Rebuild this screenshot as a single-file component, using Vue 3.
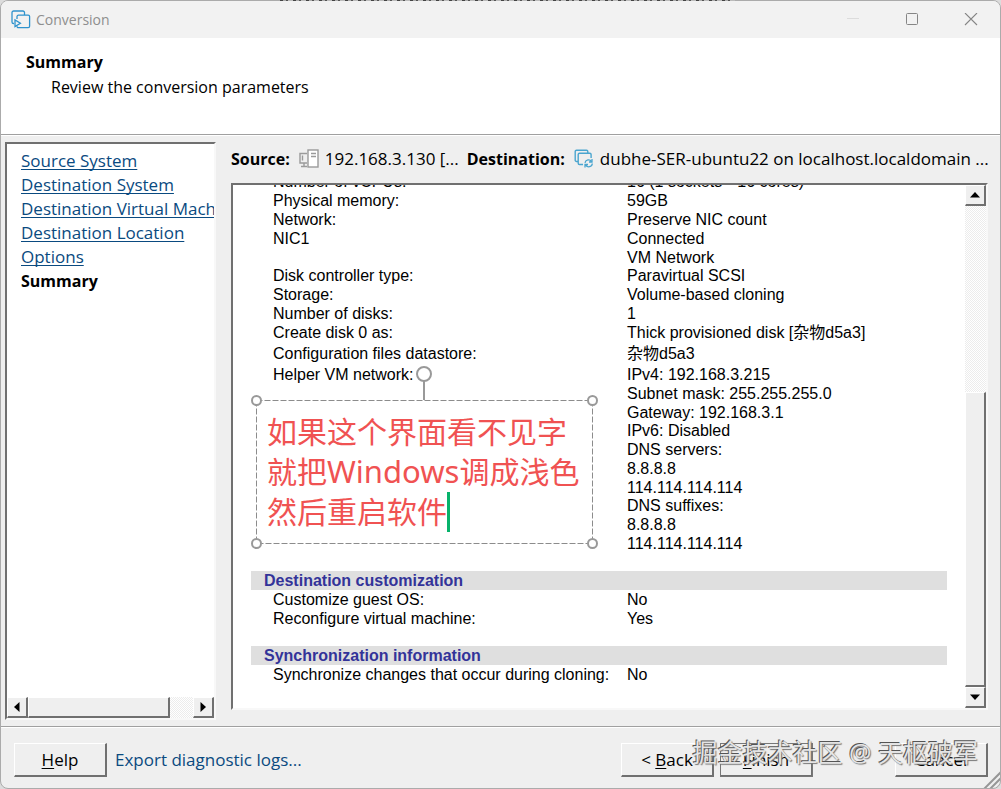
<script setup>
const steps = [
  { label: 'Source System' },
  { label: 'Destination System' },
  { label: 'Destination Virtual Machine' },
  { label: 'Destination Location' },
  { label: 'Options' },
  { label: 'Summary', current: true }
]

const sections = [
  {
    rows: [
      { label: 'Number of vCPUs:', value: '16 (1 sockets * 16 cores)' },
      { label: 'Physical memory:', value: '59GB' },
      { label: 'Network:', value: 'Preserve NIC count' },
      { label: 'NIC1', value: 'Connected' },
      { label: '', value: 'VM Network' },
      { label: 'Disk controller type:', value: 'Paravirtual SCSI', kind: 'snug' },
      { label: 'Storage:', value: 'Volume-based cloning' },
      { label: 'Number of disks:', value: '1' },
      { label: 'Create disk 0 as:', value: 'Thick provisioned disk [杂物d5a3]', kind: 'tall' },
      { label: 'Configuration files datastore:', value: '杂物d5a3', kind: 'tall' },
      { label: 'Helper VM network:', value: 'IPv4: 192.168.3.215' },
      { label: '', value: 'Subnet mask: 255.255.255.0' },
      { label: '', value: 'Gateway: 192.168.3.1' },
      { label: '', value: 'IPv6: Disabled', kind: 'snug' },
      { label: '', value: 'DNS servers:' },
      { label: '', value: '8.8.8.8' },
      { label: '', value: '114.114.114.114' },
      { label: '', value: 'DNS suffixes:', kind: 'snug' },
      { label: '', value: '8.8.8.8' },
      { label: '', value: '114.114.114.114' }
    ]
  },
  {
    title: 'Destination customization',
    rows: [
      { label: 'Customize guest OS:', value: 'No' },
      { label: 'Reconfigure virtual machine:', value: 'Yes' }
    ]
  },
  {
    title: 'Synchronization information',
    rows: [{ label: 'Synchronize changes that occur during cloning:', value: 'No' }]
  }
]
</script>

<template>
  <div class="desktop">
    <div class="window">
      <header class="titlebar">
        <svg class="app-icon" width="20" height="20" viewBox="0 0 20 20" fill="none" stroke="#2f93cd" stroke-width="1.3">
          <path d="M13.500 5V2.600A1.600 1.600 0 0 0 11.900 1H2.600A1.600 1.600 0 0 0 1 2.600v9.300a1.600 1.600 0 0 0 1.600 1.600H3" />
          <path d="M6 9V6.600A1.400 1.400 0 0 1 7.400 5.200h9.800a1.400 1.400 0 0 1 1.400 1.400v9.600a1.400 1.400 0 0 1-1.400 1.400H7.400A1.400 1.400 0 0 1 6 16.200" />
          <path d="M4 10v6.600l5.400-3.300z" />
        </svg>
        <span class="caption">Conversion</span>
        <div class="window-controls">
          <button type="button" aria-label="Minimize" disabled>
            <svg width="14" height="14" viewBox="0 0 14 14" stroke="#dcdcdc"><path d="M1 5.500h12" /></svg>
          </button>
          <button type="button" aria-label="Maximize">
            <svg width="14" height="14" viewBox="0 0 14 14" fill="none" stroke="#868686"><rect x="1.5" y=".5" width="11" height="11" rx="1" /></svg>
          </button>
          <button type="button" aria-label="Close">
            <svg width="14" height="14" viewBox="0 0 14 14" stroke="#868686" stroke-width="1.1"><path d="M1 0l12 12M13 0L1 12" /></svg>
          </button>
        </div>
      </header>

      <section class="intro">
        <h1>Summary</h1>
        <p>Review the conversion parameters</p>
      </section>

      <main class="body">
        <nav class="steps sunken">
          <ul>
            <li v-for="step in steps" :key="step.label">
              <strong v-if="step.current">{{ step.label }}</strong>
              <a v-else href="#">{{ step.label }}</a>
            </li>
          </ul>
          <div class="hscroll">
            <button type="button" class="raised arrow" aria-label="Scroll left">
              <svg width="6" height="10" viewBox="0 0 6 10"><path d="M5.5 0v10L0 5z" /></svg>
            </button>
            <div class="raised hthumb"></div>
            <div class="track htrack"></div>
            <button type="button" class="raised arrow" aria-label="Scroll right">
              <svg width="6" height="10" viewBox="0 0 6 10"><path d="M.5 0v10L6 5z" /></svg>
            </button>
          </div>
        </nav>

        <div class="details">
          <div class="route">
            <strong>Source:</strong>
            <svg class="route-icon" width="20" height="20" viewBox="0 0 20 20" fill="none" stroke="#9a9a9a" stroke-width="1.4">
              <path d="M8 4.500H1V14h7M5 14v3.500M2 17.500h6M3.500 6.500v5" />
              <rect x="9" y="1" width="10" height="17" fill="#fff" />
              <path d="M12 4.500h5M12 7.500h5" />
            </svg>
            <span>192.168.3.130 [...</span>
            <strong class="destination">Destination:</strong>
            <svg class="route-icon" width="20" height="20" viewBox="0 0 20 20" fill="none" stroke="#4aa5cf" stroke-width="1.4">
              <path d="M4 12.500H2.500A1.300 1.300 0 0 1 1.200 11.200V2.500A1.300 1.300 0 0 1 2.500 1.200h10A1.300 1.300 0 0 1 13.800 2.500V4" />
              <path d="M9 15.500H5.500a1.300 1.300 0 0 1-1.300-1.300V5.500a1.300 1.300 0 0 1 1.300-1.300h10.300a1.300 1.300 0 0 1 1.300 1.300V9" />
              <path d="M11 13.800a3.500 3.500 0 0 1 6.500-1.200M18.300 14.500a3.500 3.500 0 0 1-6.500 1.600M18 10v3h-3M11 18.500v-3h3" stroke-width="1.300" />
            </svg>
            <span>dubhe-SER-ubuntu22 on localhost.localdomain ...</span>
          </div>

          <div class="report sunken">
            <div class="viewport">
              <table v-for="(section, i) in sections" :key="i">
                <thead v-if="section.title">
                  <tr><th colspan="2">{{ section.title }}</th></tr>
                </thead>
                <tbody>
                  <tr v-for="(row, j) in section.rows" :key="j" :class="row.kind">
                    <td class="label">{{ row.label }}</td>
                    <td>{{ row.value }}</td>
                  </tr>
                </tbody>
              </table>
            </div>
            <div class="vscroll">
              <button type="button" class="raised arrow" aria-label="Scroll up">
                <svg width="10" height="6" viewBox="0 0 10 6"><path d="M0 5.500h10L5 0z" /></svg>
              </button>
              <div class="track vtrack"></div>
              <div class="raised vthumb"></div>
              <button type="button" class="raised arrow" aria-label="Scroll down">
                <svg width="10" height="6" viewBox="0 0 10 6"><path d="M0 .5h10L5 6z" /></svg>
              </button>
            </div>

            <div class="note">
              <svg class="note-frame" width="100%" height="100%" fill="none" stroke="#8c8c8c" stroke-width="1">
                <rect x=".5" y=".5" width="100%" height="100%" stroke-dasharray="6 2" />
              </svg>
              <svg class="note-pin" width="16" height="34" viewBox="0 0 16 34" fill="#fff" stroke="#999" stroke-width="2">
                <path d="M8 15v19" />
                <circle cx="8" cy="8" r="7" />
              </svg>
              <i class="handle nw"></i><i class="handle ne"></i><i class="handle sw"></i><i class="handle se"></i>
              <div>如果这个界面看不见字</div>
              <div>就把<span class="latin">Windows</span>调成浅色</div>
              <div class="caret-line">然后重启软件<span class="caret"></span></div>
            </div>
          </div>
        </div>
      </main>

      <footer class="actions">
        <button type="button" class="push raised"><u>H</u>elp</button>
        <a class="export" href="#">Export diagnostic logs...</a>
        <button type="button" class="push raised back">&lt; <u>B</u>ack</button>
        <button type="button" class="push raised finish"><u>F</u>inish</button>
        <button type="button" class="push raised cancel">Cancel</button>
        <svg class="grip" width="18" height="18" viewBox="0 0 18 18" stroke="#969696" stroke-width="2">
          <path d="M1 18L18 1M7 18L18 7M13 18l5-5" />
        </svg>
        <div class="watermark">掘金技术社区 @ 天枢破军</div>
      </footer>
    </div>
    <div class="behind"></div>
  </div>
</template>

<style>
body { margin: 0; }
</style>

<style scoped>
* { box-sizing: border-box; }
.desktop {
  position: relative;
  height: 100vh;
  display: flex;
  background: #dcdcdc;
  font-family: "Open Sans", "Noto Sans CJK SC", sans-serif;
  font-size: 17px;
  line-height: 24px;
  color: #000;
}
.behind {
  position: absolute;
  top: 0;
  left: 280px;
  width: 455px;
  height: 1px;
  background: repeating-linear-gradient(90deg, #444 0 3px, #aaa 3px 6px, #555 6px 8px, #bbb 8px 13px);
}
.window {
  flex: 1;
  min-width: 0;
  display: flex;
  flex-direction: column;
  background: #efefef;
  border: 1px solid #ababab;
  border-radius: 8px;
  overflow: hidden;
}
button { font: inherit; color: inherit; padding: 0; }
strong { font-size: 16px; }
.titlebar {
  flex: none;
  display: flex;
  align-items: center;
  height: 37px;
  padding-left: 10px;
  background: #f2f2f2;
}
.caption { margin-left: 5px; font-size: 14px; color: #8e8e8e; }
.window-controls { margin-left: auto; display: flex; }
.window-controls button {
  display: flex;
  align-items: center;
  justify-content: center;
  width: 59px;
  height: 36px;
  border: 0;
  background: none;
}
.intro {
  flex: none;
  height: 97px;
  padding: 12px 25px;
  background: #fff;
  border-bottom: 1px solid #a0a0a0;
}
h1 { margin: 0; font-size: 16px; line-height: 24px; }
.intro p { margin: 0 0 0 25px; font-size: 16px; line-height: 26px; }
.body {
  flex: 1;
  min-height: 0;
  display: flex;
  gap: 15px;
  padding: 6px 12px 6px 4px;
  border-top: 1px solid #fff;
}
.sunken {
  background: #fff;
  border: 2px solid #f8f8f8;
  border-top-color: #707070;
  border-left-color: #707070;
}
.raised {
  background: #efefef;
  border: 1px solid #fff;
  border-right: 2px solid #707070;
  border-bottom: 2px solid #707070;
}
.steps {
  flex: none;
  width: 211px;
  display: flex;
  flex-direction: column;
}
.steps ul {
  flex: 1;
  margin: 0;
  padding: 5px 0 0 14px;
  overflow: hidden;
  list-style: none;
  white-space: nowrap;
}
.steps a {
  color: #0a4a80;
  text-decoration-thickness: 1px;
  text-decoration-skip-ink: none;
  text-underline-offset: 2px;
}
.hscroll { display: flex; height: 21px; }
.arrow {
  flex: none;
  display: flex;
  align-items: center;
  justify-content: center;
  width: 21px;
  height: 21px;
}
.hthumb { flex: 6; }
.htrack { flex: 1; }
.track { background: repeating-conic-gradient(#ececec 0 25%, #fff 0 50%) 0 0 / 2px 2px; }
.details {
  flex: 1;
  min-width: 0;
  display: flex;
  flex-direction: column;
}
.route {
  flex: none;
  display: flex;
  align-items: center;
  height: 33px;
  margin-bottom: 8px;
  white-space: nowrap;
}
.route-icon { flex: none; margin: 0 6px 0 9px; }
.destination { margin-left: 8px; }
.report {
  position: relative;
  flex: 1;
  min-height: 0;
  display: flex;
  margin-bottom: 10px;
}
.viewport {
  flex: 1;
  display: flex;
  flex-direction: column;
  justify-content: flex-end;
  gap: 18px;
  overflow: hidden;
  padding: 0 18px 24px 18px;
  font-family: "Liberation Sans", "Noto Sans CJK SC", sans-serif;
  font-size: 16px;
}
table { flex: none; width: 100%; border-collapse: collapse; }
td, th { padding: 0; line-height: 19px; }
th { padding-left: 13px; text-align: left; color: #333399; background: #dfdfdf; }
td { height: 19px; vertical-align: top; white-space: nowrap; }
.label { width: 376px; padding-left: 22px; }
.snug td { height: 18px; line-height: 18px; }
.tall td { height: 21px; }
.vscroll { flex: none; width: 21px; display: flex; flex-direction: column; }
.vtrack { flex: 187; }
.vthumb { flex: 293; }
.note {
  position: absolute;
  top: 215px;
  left: 23px;
  width: 336px;
  padding: 12px 11px 11px;
  font-size: 30px;
  line-height: 40px;
  font-family: "Noto Sans", "Noto Sans CJK SC", sans-serif;
  color: #f05252;
  white-space: nowrap;
}
.latin { font-size: 31px; line-height: 30px; }
.note-frame { position: absolute; top: 0; left: 0; overflow: visible; }
.note-pin { position: absolute; top: -34px; left: calc(50% - 8px); }
.handle {
  position: absolute;
  width: 11px;
  height: 11px;
  border: 2px solid #999;
  border-radius: 50%;
  background: #fff;
}
.nw, .ne { top: -5px; }
.sw, .se { bottom: -6px; }
.nw, .sw { left: -5px; }
.ne, .se { right: -6px; }
.caret-line { display: flex; }
.caret { width: 3px; height: 40px; background: #07b36b; }
.actions {
  position: relative;
  flex: none;
  display: flex;
  height: 62px;
  padding: 16px 12px 0 13px;
  border-top: 1px solid #a0a0a0;
  box-shadow: inset 0 1px #fff;
}
.push { flex: none; width: 93px; height: 34px; }
u { text-underline-offset: 2px; }
.export { margin: 5px 0 0 8px; color: #0a4a80; text-decoration: none; }
.back { margin-left: auto; }
.finish { margin-left: 6px; outline: 1px solid #777; outline-offset: -1px; }
.cancel { margin-left: 82px; }
.grip { position: absolute; right: -1px; bottom: -1px; }
.watermark {
  position: absolute;
  right: 22px;
  top: 7px;
  font-size: 25px;
  line-height: 36px;
  color: #e4e4e4;
  text-shadow: -1px -1px #555, 1px 1px 1px #777;
  white-space: nowrap;
  pointer-events: none;
}
</style>
